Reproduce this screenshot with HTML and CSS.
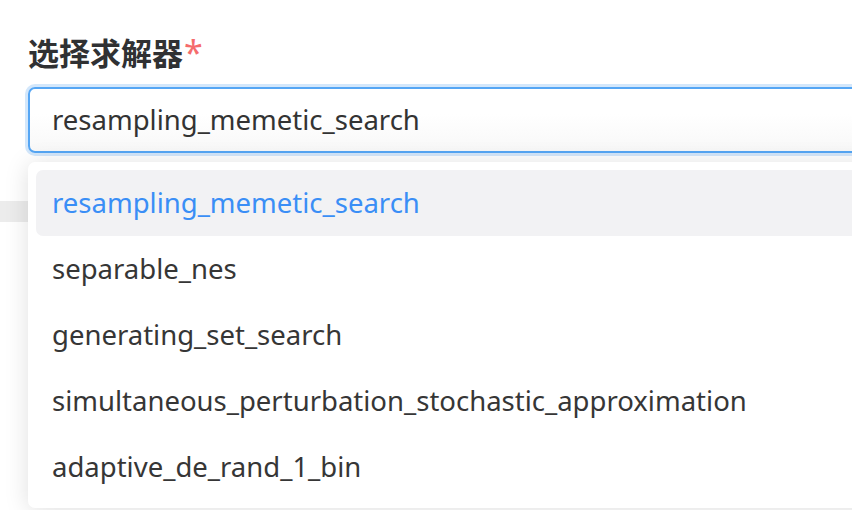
FILE: index.html
```html
<!DOCTYPE html>
<html lang="zh">
<head>
<meta charset="utf-8">
<link rel="stylesheet" href="styles.css">
</head>
<body>
<div class="page">
  <div class="field">
    <label class="label">选择求解器<span class="req">*</span></label>
    <div class="select">
      <div class="input">resampling_memetic_search</div>
      <ul class="dropdown">
        <li class="opt active">resampling_memetic_search</li>
        <li class="opt">separable_nes</li>
        <li class="opt">generating_set_search</li>
        <li class="opt">simultaneous_perturbation_stochastic_approximation</li>
        <li class="opt">adaptive_de_rand_1_bin</li>
      </ul>
    </div>
  </div>
  <div class="band"></div>
</div>
</body>
</html>
```
FILE: styles.css
```css
html, body {
  margin: 0;
  padding: 0;
  background: #ffffff;
}
body {
  font-family: "Noto Sans", "Noto Sans CJK SC", sans-serif;
  color: #333333;
}
.page {
  position: relative;
  width: 852px;
  height: 510px;
  overflow: hidden;
  padding-top: 32px;
  box-sizing: border-box;
}
.field {
  padding-left: 28px;
}
.label {
  display: block;
  font-family: "Noto Sans CJK SC", sans-serif;
  font-weight: 700;
  font-size: 31px;
  line-height: 40px;
  color: #303133;
  margin-bottom: 15px;
}
.req {
  color: #f56c6c;
  font-weight: 400;
  font-family: "Noto Sans", sans-serif;
  font-size: 34px;
  margin-left: 1px;
  vertical-align: top;
  line-height: 40px;
}
.select {
  position: relative;
  z-index: 2;
}
.input {
  box-sizing: border-box;
  width: 900px;
  height: 66px;
  border: 2px solid #55a6f4;
  border-radius: 7px;
  box-shadow: 0 0 0 3px #d3e7fb;
  background: linear-gradient(#ffffff 40%, #f8f8f8);
  padding-left: 22px;
  padding-bottom: 1px;
  font-size: 27.5px;
  line-height: 61px;
  color: #333333;
}
.dropdown {
  position: absolute;
  left: 0;
  top: 75px;
  width: 900px;
  margin: 0;
  padding: 8px;
  list-style: none;
  background: #ffffff;
  border-radius: 7px;
  box-shadow: 0 2px 24px rgba(0, 0, 0, 0.13);
}
.opt {
  height: 66px;
  line-height: 65px;
  padding-bottom: 1px;
  box-sizing: border-box;
  padding-left: 16px;
  font-size: 27.5px;
  color: #363636;
  border-radius: 7px;
}
.opt.active {
  background: #f2f2f4;
  color: #3a8ef6;
}
.band {
  margin-top: 48px;
  height: 21px;
  background: #ececec;
}
```
